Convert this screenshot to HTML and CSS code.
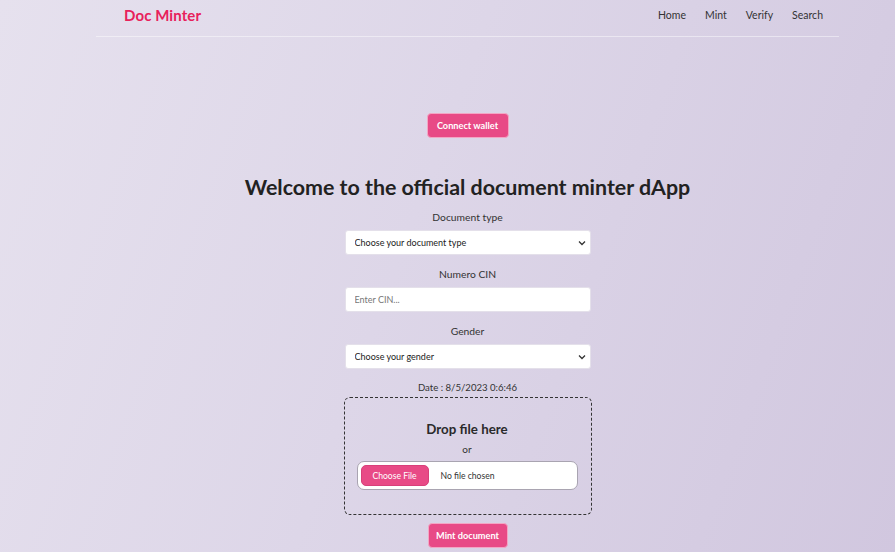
FILE: index.html
```html
<!DOCTYPE html>
<html lang="en">
<head>
<meta charset="utf-8">
<title>Doc Minter</title>
<link rel="stylesheet" href="styles.css">
</head>
<body>
<div class="page">
  <header class="topbar">
    <a class="logo" href="#">Doc Minter</a>
    <nav class="nav">
      <a href="#">Home</a>
      <a href="#">Mint</a>
      <a href="#">Verify</a>
      <a href="#">Search</a>
    </nav>
  </header>
  <main class="main">
    <button class="btn btn-connect">Connect wallet</button>
    <h1 class="title">Welcome to the official document minter dApp</h1>
    <form class="form">
      <label class="label">Document type</label>
      <div class="select-wrap">
        <select class="field select"><option>Choose your document type</option></select>
        <svg class="chev" width="8" height="6" viewBox="0 0 8 6"><path d="M1 1.5 L4 4.5 L7 1.5" fill="none" stroke="#333" stroke-width="1.3"/></svg>
      </div>
      <label class="label">Numero CIN</label>
      <input class="field input" type="text" placeholder="Enter CIN...">
      <label class="label">Gender</label>
      <div class="select-wrap">
        <select class="field select"><option>Choose your gender</option></select>
        <svg class="chev" width="8" height="6" viewBox="0 0 8 6"><path d="M1 1.5 L4 4.5 L7 1.5" fill="none" stroke="#333" stroke-width="1.3"/></svg>
      </div>
      <div class="date">Date : 8/5/2023 0:6:46</div>
      <div class="drop">
        <div class="drop-title">Drop file here</div>
        <div class="drop-or">or</div>
        <div class="file">
          <span class="file-btn">Choose File</span>
          <span class="file-name">No file chosen</span>
        </div>
      </div>
      <button type="button" class="btn btn-mint">Mint document</button>
    </form>
  </main>
</div>
</body>
</html>
```

FILE: styles.css
```css
* { box-sizing: border-box; }
html, body { margin: 0; height: 100%; }
body {
  font-family: Lato, "Open Sans", sans-serif;
  color: #2a2a2a;
  background: linear-gradient(110deg, #e6e1ee 0%, #ddd6e8 45%, #d1c7df 100%);
  overflow: hidden;
}
.page {
  width: 743px;
  margin-left: 96px;
}
.topbar {
  height: 37px;
  display: flex;
  align-items: flex-start;
  justify-content: space-between;
  border-bottom: 1px solid rgba(255,255,255,0.45);
  padding: 6px 16px 0 28px;
}
.logo {
  color: #e8215b;
  font-weight: 700;
  font-size: 15px;
  text-decoration: none;
  letter-spacing: 0.1px;
}
.nav {
  display: flex;
  gap: 19px;
  padding-top: 3px;
}
.nav a {
  color: #333;
  text-decoration: none;
  font-size: 10.5px;
}
.main {
  display: flex;
  flex-direction: column;
  align-items: center;
}
.btn {
  background: #e84a86;
  color: #fff;
  border: 1px solid #f3a6c4;
  border-radius: 4px;
  font-family: inherit;
  font-weight: 700;
  font-size: 9.2px;
  cursor: pointer;
}
.btn-connect {
  margin-top: 76px;
  width: 82px;
  height: 25px;
}
.title {
  margin: 37px 0 0;
  font-size: 21.4px;
  line-height: 24px;
  font-weight: 700;
  color: #222;
}
.form {
  width: 248px;
  display: flex;
  flex-direction: column;
  align-items: center;
  margin-top: 11px;
}
.label {
  font-size: 10.3px;
  line-height: 14px;
  color: #333;
  margin-bottom: 6px;
}
.form .label:not(:first-child) { margin-top: 12px; }
.select-wrap {
  position: relative;
  width: 246px;
  height: 25px;
}
.field {
  display: block;
  width: 246px;
  height: 25px;
  border: 1px solid #e4e0ea;
  border-radius: 3px;
  background: #fff;
  font-family: inherit;
  font-size: 9px;
  color: #222;
  padding: 0 9px;
  outline: none;
}
.select { appearance: none; -webkit-appearance: none; }
.input::placeholder { color: #777; }
.chev {
  position: absolute;
  right: 5px;
  top: 10px;
  pointer-events: none;
}
.date {
  margin-top: 12px;
  font-size: 9.6px;
  line-height: 14px;
  color: #333;
}
.drop {
  margin-top: 2px;
  width: 248px;
  height: 118px;
  border: 1px dashed #333;
  border-radius: 6px;
  display: flex;
  flex-direction: column;
  align-items: center;
  padding: 23px 13px 0 12px;
}
.drop-title {
  font-size: 13.3px;
  line-height: 17px;
  font-weight: 700;
  color: #2a2a2a;
}
.drop-or {
  margin-top: 4px;
  font-size: 10px;
  line-height: 14px;
  color: #333;
}
.file {
  margin-top: 5px;
  width: 221px;
  height: 29px;
  background: #fff;
  border: 1px solid #a9a4b1;
  border-radius: 7px;
  display: flex;
  align-items: center;
  padding-left: 3px;
}
.file-btn {
  width: 68px;
  height: 21px;
  background: #e84a86;
  border: 1px solid #d8407a;
  border-radius: 5px;
  color: #fff;
  font-size: 8.6px;
  display: flex;
  align-items: center;
  justify-content: center;
}
.file-name {
  margin-left: 12px;
  font-size: 8.6px;
  color: #333;
}
.btn-mint {
  margin-top: 8px;
  width: 80px;
  height: 25px;
}
```
